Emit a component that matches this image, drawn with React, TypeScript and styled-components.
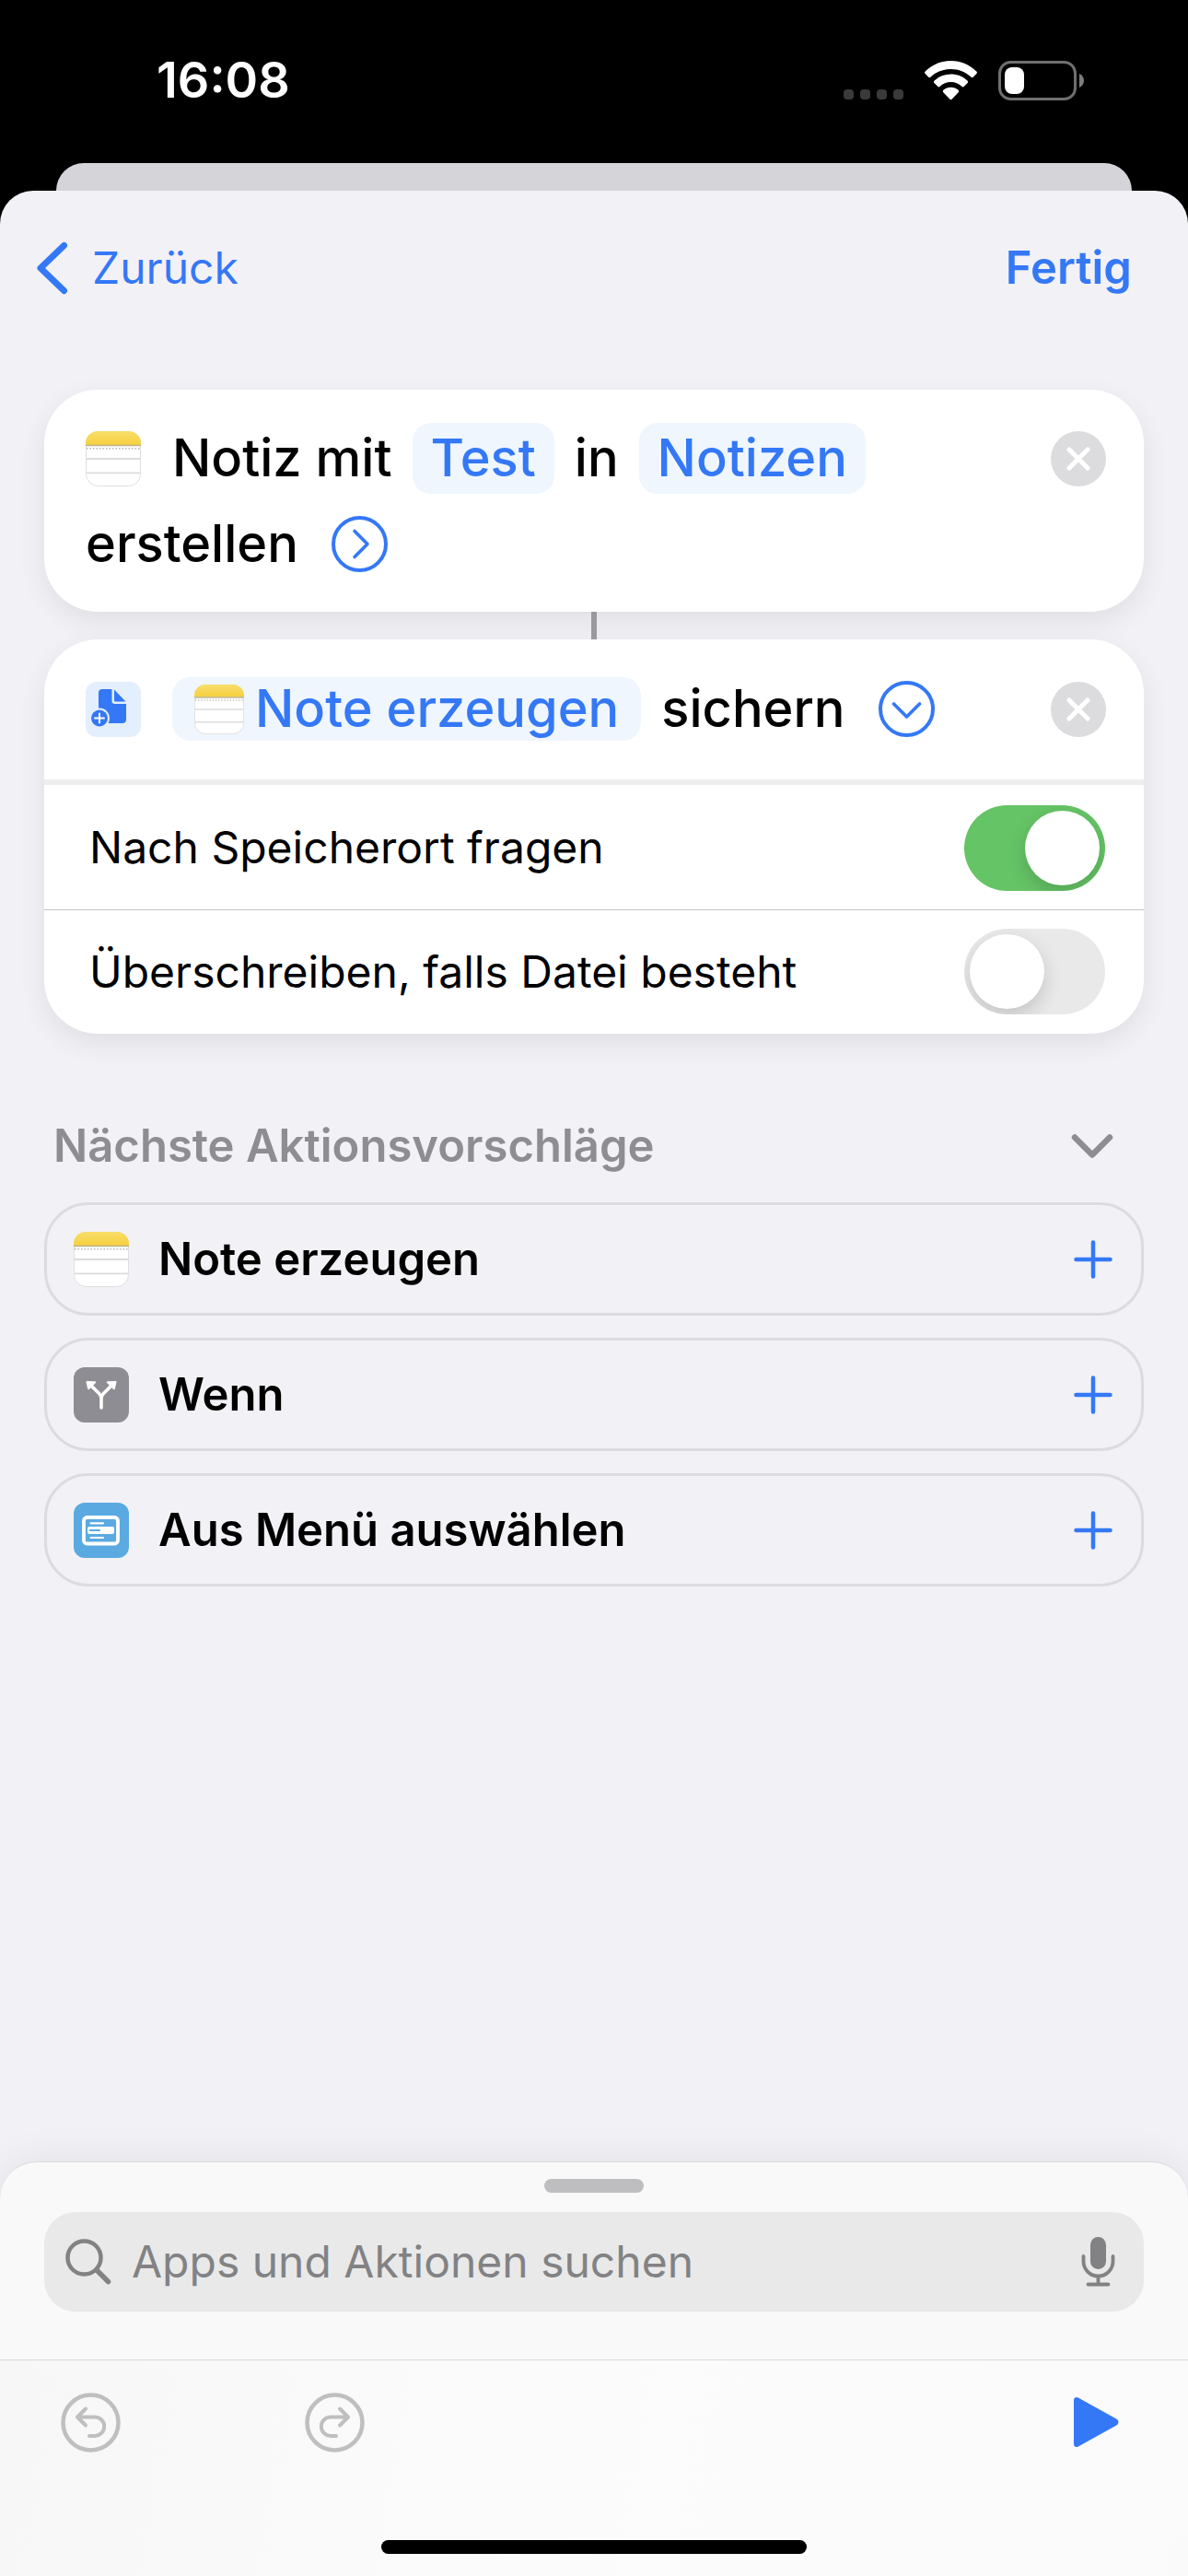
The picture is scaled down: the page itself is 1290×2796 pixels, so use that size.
import React, { useState } from "react";
import styled, { createGlobalStyle } from "styled-components";

const blue = "#3478f6";
const grey = "#8e8d92";

const GlobalStyle = createGlobalStyle`
  * { box-sizing: border-box; }
  body { margin: 0; background: #000; }
  body, button, input {
    font-family: Inter, "Liberation Sans", sans-serif;
  }
  button {
    border: 0;
    padding: 0;
    background: none;
    color: inherit;
    font: inherit;
    cursor: pointer;
  }
  svg { display: block; flex: none; }
`;

const Screen = styled.div`
  display: flex;
  flex-direction: column;
  min-height: 100vh;
  background: #000;
`;

const StatusBar = styled.header`
  display: flex;
  align-items: center;
  justify-content: space-between;
  height: 177px;
  padding: 0 112px 3px 170px;
  color: #fff;
`;

const Clock = styled.time`
  font-size: 54px;
  font-weight: 600;
  line-height: 60px;
`;

const StatusIcons = styled.div`
  display: flex;
  align-items: center;
  gap: 23px;
`;

const SheetBehind = styled.div`
  height: 30px;
  margin: 0 61px;
  border-radius: 30px 30px 0 0;
  background: #d5d4d9;
`;

const Sheet = styled.main`
  display: flex;
  flex: 1;
  flex-direction: column;
  overflow: hidden;
  border-radius: 36px 36px 0 0;
  background: #f2f1f6;
`;

const NavBar = styled.nav`
  display: flex;
  align-items: center;
  justify-content: space-between;
  height: 168px;
  padding: 0 61px 0 39px;
  color: ${blue};
  font-size: 48px;
  line-height: 60px;
`;

const BackButton = styled.button`
  display: flex;
  align-items: center;
  gap: 26px;
`;

const DoneButton = styled.button`
  && {
    font-size: 49px;
    font-weight: 600;
  }
`;

const Content = styled.div`
  display: flex;
  flex: 1;
  flex-direction: column;
  padding: 48px 48px 0;
`;

const Card = styled.section`
  border-radius: 58px;
  background: #fff;
  box-shadow: 0 10px 30px rgba(0, 0, 0, 0.08);
`;

const Connector = styled.div`
  z-index: 1;
  width: 6px;
  height: 30px;
  margin: 0 auto;
  background: #9a9a9e;
`;

const ActionHeader = styled.div<{ $compact?: boolean }>`
  display: flex;
  align-items: flex-start;
  justify-content: space-between;
  padding: ${(p) => (p.$compact ? "37px 41px 37px 45px" : "36px 41px 35px 45px")};
`;

const Phrase = styled.div`
  display: flex;
  flex: 1;
  flex-wrap: wrap;
  align-items: center;
  gap: 16px 22px;
  padding-right: 24px;
  color: #000;
  font-size: 56px;
  font-weight: 500;
  line-height: 77px;
`;

const LeadIcon = styled.span`
  margin-right: 12px;
`;

const Token = styled.button<{ $tight?: boolean }>`
  display: flex;
  align-items: center;
  gap: 12px;
  height: ${(p) => (p.$tight ? "69px" : "77px")};
  && {
    padding: ${(p) => (p.$tight ? "0 24px" : "0 20px")};
    border-radius: 20px;
    background: #eff6fe;
    color: ${blue};
  }
`;

const RoundButton = styled.button`
  margin-left: 14px;
`;

const RemoveButton = styled.button`
  && { padding: 9px 0; }
`;

const OptionList = styled.div`
  padding: 1px 0;
  border-top: 6px solid #eeeeef;
`;

const OptionRow = styled.label`
  display: flex;
  align-items: center;
  justify-content: space-between;
  height: 134px;
  padding: 0 42px 0 49px;
  color: #000;
  font-size: 48px;
  line-height: 60px;

  & + & {
    border-top: 1px solid #c4c4c6;
  }
`;

const Switch = styled.input`
  display: flex;
  width: 153px;
  height: 93px;
  margin: 0;
  padding: 6px;
  appearance: none;
  border-radius: 47px;
  background: #e9e9ea;
  overflow: hidden;
  cursor: pointer;

  &::before {
    content: "";
    width: 81px;
    height: 81px;
    border-radius: 50%;
    background: #fff;
    box-shadow: 0 8px 20px rgba(0, 0, 0, 0.16);
  }

  &:checked {
    justify-content: flex-end;
    background: #65c466;
  }
`;

const SuggestionsHeader = styled.div`
  display: flex;
  align-items: center;
  justify-content: space-between;
  margin-top: 92px;
  padding: 0 33px 0 10px;
  color: ${grey};
`;

const SuggestionsTitle = styled.h2`
  margin: 0;
  font-size: 49px;
  font-weight: 600;
  line-height: 60px;
`;

const Suggestions = styled.div`
  display: flex;
  flex-direction: column;
  gap: 24px;
  margin-top: 31px;
`;

const Suggestion = styled.button`
  && {
    display: flex;
    align-items: center;
    gap: 32px;
    height: 123px;
    padding: 0 31px 0 29px;
    border: 3px solid #dcdbe1;
    border-radius: 48px;
    color: #000;
    font-size: 49px;
    font-weight: 600;
    line-height: 60px;
    text-align: left;
  }
`;

const SuggestionName = styled.span`
  flex: 1;
`;

const Drawer = styled.section`
  padding: 18px 48px 52px;
  border-top: 1px solid #dcdcde;
  border-radius: 40px 40px 0 0;
  background: #f9f9f9;
  box-shadow: 0 0 44px rgba(0, 0, 0, 0.08);
`;

const Grabber = styled.div`
  width: 108px;
  height: 15px;
  margin: 0 auto 21px;
  border-radius: 8px;
  background: #bebec0;
`;

const SearchField = styled.div`
  display: flex;
  align-items: center;
  gap: 22px;
  height: 108px;
  padding: 0 31px 0 23px;
  border-radius: 34px;
  background: #e9e9e9;
  color: #828284;
`;

const SearchInput = styled.input`
  flex: 1;
  min-width: 0;
  height: 60px;
  padding: 0;
  border: 0;
  outline: 0;
  background: none;
  color: #000;
  font-size: 48px;
  line-height: 60px;

  &::placeholder {
    color: #828284;
    opacity: 1;
  }
`;

const Footer = styled.footer`
  border-top: 1px solid #d9d9db;
  background: linear-gradient(100deg, #f7f7f8, #fcfcfc 55%, #fafafa);
`;

const Toolbar = styled.div`
  display: flex;
  align-items: center;
  gap: 200px;
  height: 134px;
  padding: 0 75px 0 66px;
  color: #bfbfc0;
`;

const RunButton = styled.button`
  && {
    margin-left: auto;
    color: ${blue};
  }
`;

const HomeIndicator = styled.div`
  width: 462px;
  height: 15px;
  margin: 61px auto 24px;
  border-radius: 8px;
  background: #000;
`;

const stroke = {
  fill: "none",
  stroke: "currentColor",
  strokeLinecap: "round",
  strokeLinejoin: "round",
} as const;

const SignalIcon = () => (
  <svg width="65" height="43" viewBox="0 0 65 43" fill="#3a3a3a" aria-hidden="true">
    {[0, 18, 36, 54].map((x) => (
      <rect key={x} x={x} y="31" width="11" height="11" rx="4" />
    ))}
  </svg>
);

const WifiIcon = () => (
  <svg width="57" height="43" viewBox="0 0 57 43" fill="#fff" aria-hidden="true">
    <path d="M28.500 0C39.500 0 49 4.300 56.300 11.500a1.800 1.800 0 0 1 0 2.600l-3.300 3.500a1.800 1.800 0 0 1-2.600 0C44.600 12.100 37 8.900 28.500 8.900S12.400 12.100 6.600 17.600a1.800 1.800 0 0 1-2.600 0L.7 14.100a1.800 1.800 0 0 1 0-2.600C8 4.300 17.500 0 28.500 0z" />
    <path d="M28.500 14.600c7 0 13.200 2.600 17.900 7a1.800 1.800 0 0 1 0 2.600l-3.500 3.500a1.800 1.800 0 0 1-2.600 0c-3.200-2.900-7.200-4.600-11.800-4.600s-8.600 1.700-11.800 4.600a1.800 1.800 0 0 1-2.600 0l-3.500-3.500a1.800 1.800 0 0 1 0-2.600c4.700-4.400 10.900-7 17.900-7z" />
    <path d="M28.500 28.800c3.100 0 5.900 1.100 8.100 3a1.700 1.700 0 0 1 .1 2.500l-7 7.300a1.700 1.700 0 0 1-2.400 0l-7-7.300a1.700 1.700 0 0 1 .1-2.500c2.200-1.900 5-3 8.100-3z" />
  </svg>
);

const BatteryIcon = () => (
  <svg width="94" height="43" viewBox="0 0 94 43" aria-hidden="true">
    <rect x="1.500" y="1.500" width="82" height="40" rx="12" fill="none" stroke="#6f6f6f" strokeWidth="3" />
    <rect x="7" y="7" width="21" height="29" rx="8" fill="#fff" />
    <path d="M88 14c3 1.200 5 4.200 5 7.500s-2 6.300-5 7.500z" fill="#7c7c7c" />
  </svg>
);

const BackChevron = () => (
  <svg width="35" height="58" viewBox="0 0 35 58" {...stroke} strokeWidth="7" aria-hidden="true">
    <path d="M30.500 4.500 5 29l25.500 24.500" />
  </svg>
);

const DownChevron = () => (
  <svg width="46" height="28" viewBox="0 0 46 28" {...stroke} strokeWidth="6.500" aria-hidden="true">
    <path d="M4 4.500l19 19 19-19" />
  </svg>
);

const CircleChevron = ({ down }: { down?: boolean }) => (
  <svg width="61" height="61" viewBox="0 0 61 61" {...stroke} color={blue} aria-hidden="true">
    <circle cx="30.500" cy="30.500" r="28.500" strokeWidth="4" />
    <path d={down ? "M16.500 25l14 14 14-14" : "M25 16.500l14 14-14 14"} strokeWidth="3.600" />
  </svg>
);

const RemoveIcon = () => (
  <svg width="60" height="60" viewBox="0 0 60 60" {...stroke} aria-hidden="true">
    <circle cx="30" cy="30" r="30" fill="#dcdcde" stroke="none" />
    <path d="M20 20l20 20M40 20 20 40" stroke="#fff" strokeWidth="5" />
  </svg>
);

const NotesIcon = ({ size = 60 }: { size?: number }) => (
  <svg width={size} height={size} viewBox="0 0 60 60" aria-hidden="true">
    <defs>
      <linearGradient id="notesHeader" x1="0" y1="0" x2="0" y2="1">
        <stop offset="0" stopColor="#f7de6b" />
        <stop offset="1" stopColor="#f8d03f" />
      </linearGradient>
    </defs>
    <rect x=".5" y=".5" width="59" height="59" rx="13" fill="#fff" stroke="#dfdfe0" />
    <path d="M0 15v-2A13 13 0 0 1 13 0h34a13 13 0 0 1 13 13v2z" fill="url(#notesHeader)" />
    <path d="M0 15.500h60" stroke="#bdb38a" strokeWidth="1.500" />
    <path d="M1 18.800h58" stroke="#b5b5b5" strokeWidth="1.500" strokeDasharray="1.500 2" />
    <path d="M1 30h58M1 45.300h58" stroke="#dcdcde" strokeWidth="1.800" />
  </svg>
);

const SaveFileIcon = () => (
  <svg width="60" height="60" viewBox="0 0 60 60" aria-hidden="true">
    <rect width="60" height="60" rx="12" fill="#e4effd" />
    <path d="M18 8h10.500v13a3 3 0 0 0 3 3H44v17a4 4 0 0 1-4 4H18a4 4 0 0 1-4-4V12a4 4 0 0 1 4-4z" fill={blue} />
    <path d="M31 8.500 43.500 21.500H32a1 1 0 0 1-1-1z" fill={blue} />
    <circle cx="15" cy="39.500" r="11" fill="#e4effd" />
    <circle cx="15" cy="39.500" r="9" fill={blue} />
    <path d="M15 34.500v10M10 39.500h10" stroke="#fff" strokeWidth="2" strokeLinecap="round" />
  </svg>
);

const BranchIcon = () => (
  <svg width="60" height="60" viewBox="0 0 60 60" aria-hidden="true">
    <rect width="60" height="60" rx="12" fill="#8e8d93" />
    <path d="M30 44V34c0-2.500-.8-3.800-2.400-5.400L19 20M30 34c0-2.500.8-3.800 2.400-5.400L41 20" fill="none" stroke="#fff" strokeWidth="3.600" strokeLinecap="round" />
    <path d="M14.500 15l8.700.3c1 .1 1.300 1 .7 1.700l-7 7c-.7.700-1.700.3-1.800-.7L13.500 16c0-.6.400-1 1-1zM45.500 15l-8.700.3c-1 .1-1.300 1-.7 1.700l7 7c.7.700 1.700.3 1.800-.7l1.600-7.300c0-.6-.4-1-1-1z" fill="#fff" />
  </svg>
);

const MenuIcon = () => (
  <svg width="60" height="60" viewBox="0 0 60 60" strokeLinecap="round" aria-hidden="true">
    <rect width="60" height="60" rx="12" fill="#5aaae1" />
    <rect x="11" y="16" width="37" height="28.500" rx="3.500" fill="none" stroke="#fff" strokeWidth="3.800" />
    <rect x="15" y="26" width="29" height="8" rx="2" fill="#fff" />
    <path d="M18.500 22.300H32M18.500 38H32" stroke="#fff" strokeWidth="2.200" />
    <path d="M18 30h10" stroke="#5aaae1" strokeWidth="2.200" />
  </svg>
);

const PlusIcon = () => (
  <svg width="42" height="42" viewBox="0 0 42 42" {...stroke} strokeWidth="4.500" color={blue} aria-hidden="true">
    <path d="M21 2.500v37M2.500 21h37" />
  </svg>
);

const SearchIcon = () => (
  <svg width="50" height="50" viewBox="0 0 50 50" {...stroke} aria-hidden="true">
    <circle cx="20.500" cy="20.500" r="18" strokeWidth="4.500" />
    <path d="M34 34l12.500 12.500" strokeWidth="5.500" />
  </svg>
);

const MicIcon = () => (
  <svg width="37" height="54" viewBox="0 0 37 54" {...stroke} strokeWidth="3.800" aria-hidden="true">
    <rect x="10" y="0" width="17" height="35" rx="8.500" fill="currentColor" stroke="none" />
    <path d="M2.500 21v5.500a16 16 0 0 0 32 0V21M18.500 43v8M7.500 51.500h22" />
  </svg>
);

const UndoIcon = ({ flipped }: { flipped?: boolean }) => (
  <svg width="65" height="65" viewBox="0 0 65 65" {...stroke} aria-hidden="true">
    <circle cx="32.500" cy="32.500" r="30" strokeWidth="4.500" />
    <g strokeWidth="4" transform={flipped ? "matrix(-1 0 0 1 65 0)" : undefined}>
      <path d="M27 17.500 18 26.500l9 9M18.500 26.500H37a10.200 10.200 0 0 1 0 20.400h-6" />
    </g>
  </svg>
);

const PlayIcon = () => (
  <svg width="49" height="54" viewBox="0 0 49 54" fill="currentColor" aria-hidden="true">
    <path d="M0 3C0 .5 2.600-.8 4.800.6l41.500 23c2.900 1.800 2.900 5 0 6.800l-41.500 23C2.600 54.800 0 53.500 0 51z" />
  </svg>
);

const suggestions = [
  { name: "Note erzeugen", Icon: NotesIcon },
  { name: "Wenn", Icon: BranchIcon },
  { name: "Aus Menü auswählen", Icon: MenuIcon },
];

export default function App() {
  const [askLocation, setAskLocation] = useState(true);
  const [overwrite, setOverwrite] = useState(false);

  return (
    <>
      <GlobalStyle />
      <Screen>
        <StatusBar>
          <Clock>16:08</Clock>
          <StatusIcons>
            <SignalIcon />
            <WifiIcon />
            <BatteryIcon />
          </StatusIcons>
        </StatusBar>
        <SheetBehind />
        <Sheet>
          <NavBar>
            <BackButton type="button">
              <BackChevron />
              Zurück
            </BackButton>
            <DoneButton type="button">Fertig</DoneButton>
          </NavBar>

          <Content>
            <Card>
              <ActionHeader>
                <Phrase>
                  <LeadIcon><NotesIcon /></LeadIcon>
                  <span>Notiz mit</span>
                  <Token type="button">Test</Token>
                  <span>in</span>
                  <Token type="button">Notizen</Token>
                  <span>erstellen</span>
                  <RoundButton type="button" aria-label="Mehr anzeigen"><CircleChevron /></RoundButton>
                </Phrase>
                <RemoveButton type="button" aria-label="Aktion entfernen"><RemoveIcon /></RemoveButton>
              </ActionHeader>
            </Card>

            <Connector />

            <Card>
              <ActionHeader $compact>
                <Phrase>
                  <LeadIcon><SaveFileIcon /></LeadIcon>
                  <Token type="button" $tight>
                    <NotesIcon size={54} />
                    Note erzeugen
                  </Token>
                  <span>sichern</span>
                  <RoundButton type="button" aria-label="Weniger anzeigen"><CircleChevron down /></RoundButton>
                </Phrase>
                <RemoveButton type="button" aria-label="Aktion entfernen"><RemoveIcon /></RemoveButton>
              </ActionHeader>
              <OptionList>
                <OptionRow>
                  Nach Speicherort fragen
                  <Switch type="checkbox" checked={askLocation} onChange={(e) => setAskLocation(e.target.checked)} />
                </OptionRow>
                <OptionRow>
                  Überschreiben, falls Datei besteht
                  <Switch type="checkbox" checked={overwrite} onChange={(e) => setOverwrite(e.target.checked)} />
                </OptionRow>
              </OptionList>
            </Card>

            <SuggestionsHeader>
              <SuggestionsTitle>Nächste Aktionsvorschläge</SuggestionsTitle>
              <button type="button" aria-label="Vorschläge ausblenden"><DownChevron /></button>
            </SuggestionsHeader>
            <Suggestions>
              {suggestions.map(({ name, Icon }) => (
                <Suggestion key={name} type="button">
                  <Icon />
                  <SuggestionName>{name}</SuggestionName>
                  <PlusIcon />
                </Suggestion>
              ))}
            </Suggestions>
          </Content>

          <Drawer>
            <Grabber />
            <SearchField>
              <SearchIcon />
              <SearchInput type="text" aria-label="Apps und Aktionen suchen" placeholder="Apps und Aktionen suchen" />
              <button type="button" aria-label="Diktieren"><MicIcon /></button>
            </SearchField>
          </Drawer>
          <Footer>
            <Toolbar>
              <button type="button" aria-label="Widerrufen"><UndoIcon /></button>
              <button type="button" aria-label="Wiederholen"><UndoIcon flipped /></button>
              <RunButton type="button" aria-label="Ausführen"><PlayIcon /></RunButton>
            </Toolbar>
            <HomeIndicator />
          </Footer>
        </Sheet>
      </Screen>
    </>
  );
}
